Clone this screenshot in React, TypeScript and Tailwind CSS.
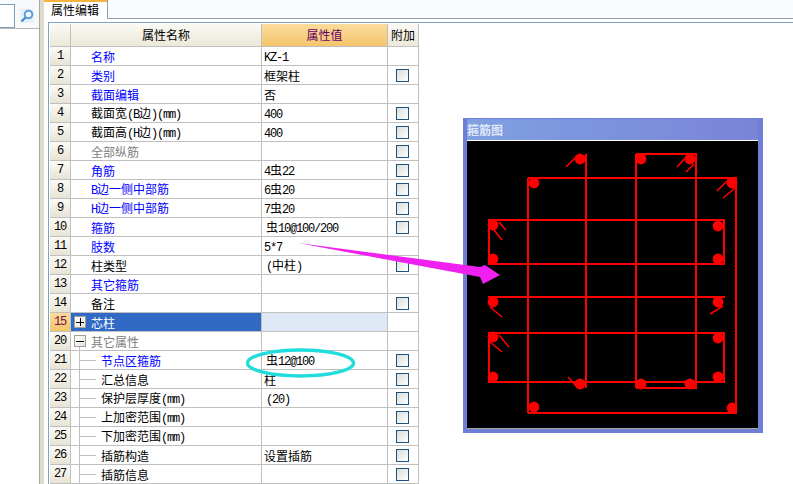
const cjk = '"Noto Sans CJK SC", "Liberation Sans", sans-serif';

type Row = {
  no: number;
  name: string;
  value?: string;
  tone?: 'blue' | 'gray' | 'black';
  check?: boolean;
  child?: boolean;
};

const rows: Row[] = [
  { no: 1, name: '名称', value: 'KZ-1', tone: 'blue' },
  { no: 2, name: '类别', value: '框架柱', tone: 'blue', check: true },
  { no: 3, name: '截面编辑', value: '否', tone: 'blue' },
  { no: 4, name: '截面宽(B边)(mm)', value: '400', check: true },
  { no: 5, name: '截面高(H边)(mm)', value: '400', check: true },
  { no: 6, name: '全部纵筋', tone: 'gray', check: true },
  { no: 7, name: '角筋', value: '4虫22', tone: 'blue', check: true },
  { no: 8, name: 'B边一侧中部筋', value: '6虫20', tone: 'blue', check: true },
  { no: 9, name: 'H边一侧中部筋', value: '7虫20', tone: 'blue', check: true },
  { no: 10, name: '箍筋', value: ' 虫10@100/200', tone: 'blue', check: true },
  { no: 11, name: '肢数', value: '5*7', tone: 'blue' },
  { no: 12, name: '柱类型', value: ' (中柱)', check: true },
  { no: 13, name: '其它箍筋', tone: 'blue' },
  { no: 14, name: '备注', check: true },
];

const childRows: Row[] = [
  { no: 21, name: '节点区箍筋', value: ' 虫12@100', tone: 'blue', check: true, child: true },
  { no: 22, name: '汇总信息', value: '柱', check: true, child: true },
  { no: 23, name: '保护层厚度(mm)', value: ' (20)', check: true, child: true },
  { no: 24, name: '上加密范围(mm)', check: true, child: true },
  { no: 25, name: '下加密范围(mm)', check: true, child: true },
  { no: 26, name: '插筋构造', value: '设置插筋', check: true, child: true },
  { no: 27, name: '插筋信息', check: true, child: true },
];

const toneClass = {
  blue: 'text-[#0000ff]',
  gray: 'text-[#808080]',
  black: 'text-black',
};

// latin characters take half a CJK cell, as in the old bitmap font
function Txt({ text }: { text: string }) {
  const lead = text.startsWith(' ');
  const parts = text.trim().split(/([\x21-\x7e]+)/).filter(Boolean);
  return (
    <span className={lead ? 'ml-[2px] inline-block whitespace-pre pt-[2px]' : 'inline-block whitespace-pre pt-[2px]'}>
      {parts.map((p, i) =>
        /^[\x21-\x7e]+$/.test(p) ? (
          <span key={i} className="font-['Liberation_Mono'] text-[12px] tracking-[-1.2px]">
            {p}
          </span>
        ) : (
          <span key={i}>{p}</span>
        ),
      )}
    </span>
  );
}

function Checkbox() {
  return (
    <div className="h-[13px] w-[13px] border border-[#1c5180] bg-gradient-to-br from-[#dcdcd7] to-white" />
  );
}

function NumCell({ no, active }: { no: number; active?: boolean }) {
  return (
    <div
      className={
        active
          ? 'flex w-[21px] items-center justify-center border-r border-[#c0c0c0] bg-gradient-to-b from-[#fbdc9c] to-[#f4c56a] text-[#7a0a4a]'
          : 'flex w-[21px] items-center justify-center border-r border-[#c0c0c0] bg-gradient-to-b from-[#fbfaf6] to-[#e8e4d4]'
      }
    >
      <span className="font-['Liberation_Mono'] text-[12px] tracking-[-1.2px]">{no}</span>
    </div>
  );
}

function PropRow({ row }: { row: Row }) {
  return (
    <div className="flex h-[19px] border-b border-[#c0c0c0] bg-white text-black">
      <NumCell no={row.no} />
      <div className="relative flex w-[191px] items-center border-r border-[#c0c0c0]">
        {row.child ? (
          <>
            <div className="absolute left-[8px] top-0 h-full w-px bg-[#c0c0c0]" />
            <div className="ml-[9px] h-px w-[16px] bg-[#c0c0c0]" />
            <div className={`ml-[5px] ${toneClass[row.tone ?? 'black']}`}>
              <Txt text={row.name} />
            </div>
          </>
        ) : (
          <div className={`ml-[20px] ${toneClass[row.tone ?? 'black']}`}>
            <Txt text={row.name} />
          </div>
        )}
      </div>
      <div className="flex w-[126px] items-center border-r border-[#c0c0c0] pl-[2px]">
        {row.value && <Txt text={row.value} />}
      </div>
      <div className="flex w-[31px] items-center justify-center border-r border-[#c0c0c0] pr-[1px]">
        {row.check && <Checkbox />}
      </div>
    </div>
  );
}

function Expander({ sign }: { sign: '+' | '-' }) {
  return (
    <div className="relative ml-[3px] flex h-[12px] w-[12px] items-center justify-center border border-[#a0a0a0] bg-gradient-to-br from-white to-[#e4e2d8]">
      <div className="h-px w-[8px] bg-black" />
      {sign === '+' && <div className="absolute h-[8px] w-px bg-black" />}
    </div>
  );
}

function PropertyTable() {
  return (
    <div className="ml-[1px] mt-px w-[369px] text-[12px] leading-none">
      <div className="flex h-[23px] border-b border-[#c0c0c0]">
        <div className="w-[21px] border-r border-[#c0c0c0] bg-gradient-to-b from-[#faf9f4] to-[#ece9d8]" />
        <div className="flex w-[191px] items-center justify-center border-r border-[#c0c0c0] bg-gradient-to-b from-[#faf9f4] to-[#ece9d8]">
          属性名称
        </div>
        <div className="flex w-[126px] items-center justify-center border-r border-[#c0c0c0] bg-gradient-to-b from-[#fbdc9c] to-[#f4c56a] text-[#660066]">
          属性值
        </div>
        <div className="flex w-[31px] items-center justify-center border-r border-[#c0c0c0] bg-gradient-to-b from-[#faf9f4] to-[#ece9d8]">
          附加
        </div>
      </div>

      {rows.map((r) => (
        <PropRow key={r.no} row={r} />
      ))}

      {/* collapsed group, selected */}
      <div className="flex h-[19px] border-b border-[#c0c0c0]">
        <NumCell no={15} active />
        <div className="flex w-[191px] items-center border-r border-[#c0c0c0] bg-[#316ac5] text-white">
          <Expander sign="+" />
          <span className="ml-[5px] inline-block pt-[2px]">芯柱</span>
        </div>
        <div className="w-[126px] border-r border-[#c0c0c0] bg-[#dfe8f5]" />
        <div className="w-[31px] border-r border-[#c0c0c0] bg-white" />
      </div>

      {/* expanded group */}
      <div className="flex h-[19px] border-b border-[#c0c0c0] bg-white">
        <NumCell no={20} />
        <div className="relative flex w-[191px] items-center border-r border-[#c0c0c0] text-[#808080]">
          <div className="absolute bottom-0 left-[8px] h-[3px] w-px bg-[#c0c0c0]" />
          <Expander sign="-" />
          <span className="ml-[5px] inline-block pt-[2px]">其它属性</span>
        </div>
        <div className="w-[126px] border-r border-[#c0c0c0]" />
        <div className="w-[31px] border-r border-[#c0c0c0]" />
      </div>

      {childRows.map((r) => (
        <PropRow key={r.no} row={r} />
      ))}
    </div>
  );
}

const stirrupLines = [
  // horizontal legs
  [636, 154, 697, 154],
  [528, 178, 737, 178],
  [488, 220, 725, 220],
  [488, 264, 725, 264],
  [488, 297, 725, 297],
  [488, 333, 725, 333],
  [488, 382, 725, 382],
  [636, 388, 697, 388],
  [528, 413, 737, 413],
  // vertical legs
  [489, 220, 489, 264],
  [489, 333, 489, 382],
  [528, 178, 528, 413],
  [586, 154, 586, 388],
  [636, 154, 636, 388],
  [696, 154, 696, 388],
  [724, 220, 724, 264],
  [724, 333, 724, 382],
  [736, 178, 736, 413],
];

const hooks = [
  [566, 167, 577, 156],
  [499, 222, 506, 230],
  [490, 225, 502, 240],
  [677, 167, 688, 155],
  [686, 172, 694, 164],
  [717, 191, 730, 178],
  [723, 198, 735, 188],
  [490, 307, 502, 317],
  [499, 335, 509, 347],
  [490, 342, 502, 352],
  [568, 377, 577, 387],
  [710, 314, 723, 306],
];

const bars = [
  [580, 159], [534, 183], [493, 225], [493, 259], [641, 159], [690, 159],
  [732, 183], [718, 226], [718, 259], [493, 302], [493, 337], [493, 377],
  [534, 407], [580, 384], [641, 384], [690, 384], [718, 302], [718, 338],
  [718, 377], [732, 408],
];

function SectionDrawing() {
  return (
    <svg viewBox="467 141 291 287" className="block h-[287px] w-[291px]">
      {stirrupLines.map(([x1, y1, x2, y2], i) => (
        <line key={i} x1={x1} y1={y1} x2={x2} y2={y2} stroke="#ff0000" strokeWidth="2" shapeRendering="crispEdges" />
      ))}
      {hooks.map(([x1, y1, x2, y2], i) => (
        <line key={i} x1={x1} y1={y1} x2={x2} y2={y2} stroke="#ff0000" strokeWidth="1.6" />
      ))}
      {bars.map(([cx, cy], i) => (
        <circle key={i} cx={cx} cy={cy} r="5.4" fill="#ff0000" />
      ))}
    </svg>
  );
}

export default function App() {
  return (
    <div
      className="relative flex h-[484px] w-[793px] overflow-hidden bg-white text-black"
      style={{ fontFamily: cjk }}
    >
      {/* left tree panel, clipped at the search row */}
      <div className="w-[40px] shrink-0 border-r border-[#a8a8a0]">
        <div className="flex h-[29px] border-b border-[#b8b8b0] bg-[#f8f9fb] pt-[4px]">
          <div className="h-[24px] w-[15px] border-y border-r border-[#7f9db9] bg-white" />
          <div className="ml-[5px] mt-[5px] flex h-[14px] w-[14px] items-center justify-center bg-[#e6f1fa]">
            <svg viewBox="0 0 14 14" className="h-[14px] w-[14px]">
              <circle cx="8.5" cy="5.5" r="3.8" fill="#f2f8fd" stroke="#5a9fd8" strokeWidth="2" />
              <line x1="5.5" y1="8.5" x2="1.5" y2="12.5" stroke="#3f88c8" strokeWidth="2.2" />
            </svg>
          </div>
        </div>
      </div>
      <div className="w-[4px] shrink-0 bg-[#e0dccb]" />

      <div className="flex min-w-0 flex-1 flex-col">
        {/* tab strip */}
        <div className="flex h-[19px] shrink-0 border-b border-[#8c9fb0] bg-[#fafbff]">
          <div className="h-[19px] w-[64px] border-r border-[#8c9fb0] bg-white">
            <div className="h-[2px] bg-[#f5b53c]" />
            <div className="pl-[7px] pt-[1px] text-[12px] leading-[14px]">属性编辑</div>
          </div>
        </div>
        <div className="h-[3px] shrink-0" />
        <div className="ml-[4px] flex-1 border-l border-t border-[#7da2c4]">
          <PropertyTable />
        </div>
      </div>

      {/* floating preview window */}
      <div className="absolute left-[463px] top-[118px] flex h-[315px] w-[300px] flex-col border-b-[5px] border-l-[4px] border-r-[5px] border-t border-[#6f7fd6] bg-[#6f7fd6]">
        <div className="flex h-[21px] shrink-0 items-center bg-gradient-to-r from-[#7fa0e2] to-[#7a84d8] pt-[1px] text-[12px] font-bold text-[#dfe7f6]">
          箍筋图
        </div>
        <div className="h-px shrink-0 bg-white" />
        <div className="flex-1 bg-black">
          <SectionDrawing />
        </div>
        <div className="h-px shrink-0 bg-[#aca899]" />
      </div>

      {/* hand-drawn markup on top */}
      <svg viewBox="0 0 793 484" className="pointer-events-none absolute left-0 top-0 h-[484px] w-[793px]">
        <polygon points="298,243 480,267 485,265 500,275 483,284 480,277" fill="#f020f0" />
        <ellipse cx="300.5" cy="363" rx="53" ry="13" fill="none" stroke="#20dcdc" strokeWidth="3.4" />
      </svg>
    </div>
  );
}
